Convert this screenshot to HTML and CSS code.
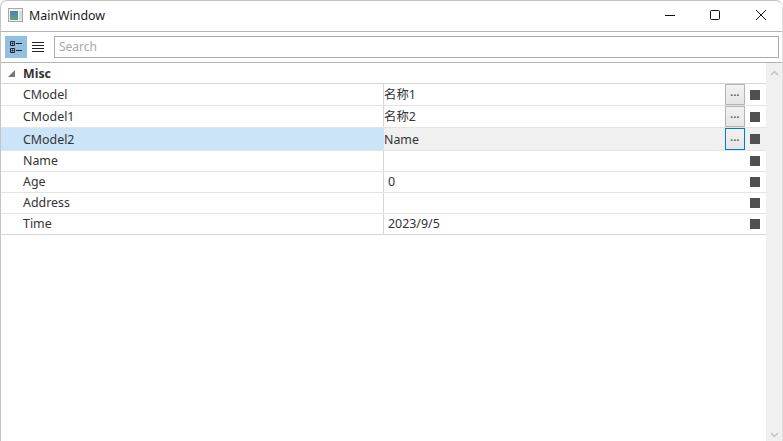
FILE: index.html
```html
<!DOCTYPE html>
<html lang="en">
<head>
  <meta charset="UTF-8">
  <title>MainWindow</title>
  <link rel="stylesheet" href="styles.css">
</head>
<body>
  <div class="window">
    <div class="titlebar">
      <svg class="app-icon" width="16" height="16" viewBox="0 0 16 16">
        <defs>
          <linearGradient id="pane" x1="0" y1="0" x2="0" y2="1">
            <stop offset="0" stop-color="#4d7fb5"/>
            <stop offset="1" stop-color="#5fa37c"/>
          </linearGradient>
        </defs>
        <rect x="0.5" y="0.5" width="14" height="13" fill="#f2f2f2" stroke="#a6a6a6"/>
        <rect x="2" y="3" width="8" height="9" fill="url(#pane)"/>
        <rect x="11" y="3" width="3" height="9" fill="#d5dedc"/>
      </svg>
      <span class="title">MainWindow</span>
      <div class="caption-buttons">
        <svg class="caption-btn" width="46" height="30" viewBox="0 0 46 30"><path d="M21 14.5h10" stroke="#111" fill="none"/></svg>
        <svg class="caption-btn" width="46" height="30" viewBox="0 0 46 30"><rect x="20.5" y="9.5" width="9" height="9" rx="1" stroke="#111" fill="none"/></svg>
        <svg class="caption-btn" width="46" height="30" viewBox="0 0 46 30"><path d="M20 9l10 10M30 9l-10 10" stroke="#111" fill="none"/></svg>
      </div>
    </div>

    <div class="toolbar">
      <button class="tool-btn active">
        <svg width="14" height="14" viewBox="0 0 14 14">
          <path d="M1.5 1.5h4v4h-4zM1.5 8.5h4v4h-4z" fill="none" stroke="#222"/>
          <path d="M2.5 3.5h2M3.5 2.5v2M2.5 10.5h2M3.5 9.5v2M7 3.5h6M7 10.5h6" stroke="#222" fill="none"/>
        </svg>
      </button>
      <button class="tool-btn">
        <svg width="14" height="14" viewBox="0 0 14 14">
          <path d="M1 2.5h12M1 5.5h12M1 8.5h12M1 11.5h12" stroke="#222" fill="none"/>
        </svg>
      </button>
      <div class="search">Search</div>
    </div>

    <div class="content">
      <div class="grid">
        <div class="category">
          <svg class="expander" width="7" height="7" viewBox="0 0 7 7"><path d="M7 0v7H0z" fill="#777"/></svg>
          <span>Misc</span>
        </div>

        <div class="row tall">
          <div class="name">CModel</div>
          <div class="value tight">名称1</div>
          <div class="more"><button class="more-btn">...</button></div>
          <div class="marker"></div>
        </div>
        <div class="row tall">
          <div class="name">CModel1</div>
          <div class="value tight">名称2</div>
          <div class="more"><button class="more-btn">...</button></div>
          <div class="marker"></div>
        </div>
        <div class="row tall selected">
          <div class="name">CModel2</div>
          <div class="value tight">Name</div>
          <div class="more"><button class="more-btn focused">...</button></div>
          <div class="marker"></div>
        </div>
        <div class="row">
          <div class="name">Name</div>
          <div class="value"></div>
          <div class="more"></div>
          <div class="marker"></div>
        </div>
        <div class="row">
          <div class="name">Age</div>
          <div class="value">0</div>
          <div class="more"></div>
          <div class="marker"></div>
        </div>
        <div class="row">
          <div class="name">Address</div>
          <div class="value"></div>
          <div class="more"></div>
          <div class="marker"></div>
        </div>
        <div class="row">
          <div class="name">Time</div>
          <div class="value">2023/9/5</div>
          <div class="more"></div>
          <div class="marker"></div>
        </div>
      </div>

      <div class="scrollbar">
        <svg width="9" height="6" viewBox="0 0 9 6"><path d="M1 5l3.5-3.5L8 5" stroke="#c4c4c4" stroke-width="1.5" fill="none"/></svg>
        <svg width="9" height="6" viewBox="0 0 9 6"><path d="M1 1l3.5 3.5L8 1" stroke="#c4c4c4" stroke-width="1.5" fill="none"/></svg>
      </div>
    </div>
  </div>
</body>
</html>
```

FILE: styles.css
```css
* {
  box-sizing: border-box;
}

html, body {
  height: 100%;
}

body {
  margin: 0;
  background: #fff;
  font-family: "Noto Sans", "Noto Sans CJK SC", sans-serif;
  font-size: 12.4px;
  color: #333;
  overflow: hidden;
}

.window {
  display: flex;
  flex-direction: column;
  height: 441px;
  border-left: 1px solid #c4c4c4;
  border-top: 1px solid #c4c4c4;
  border-right: 1px solid #e0e0e0;
  border-radius: 7px 7px 0 0;
}

.titlebar {
  display: flex;
  align-items: center;
  height: 30px;
  padding-left: 7px;
  flex-shrink: 0;
}

.app-icon {
  margin-right: 5px;
}

.title {
  padding-bottom: 2px;
  color: #1a1a1a;
}

.caption-buttons {
  display: flex;
  margin-left: auto;
}

.toolbar {
  display: flex;
  align-items: center;
  height: 32px;
  padding: 0 3px 0 4px;
  border-top: 1px solid #b4b4b4;
  border-bottom: 1px solid #b4b4b4;
  flex-shrink: 0;
}

.tool-btn {
  display: flex;
  align-items: center;
  justify-content: center;
  width: 22px;
  height: 22px;
  padding: 0;
  border: none;
  background: transparent;
}

.tool-btn.active {
  background: #92c0e0;
}

.search {
  flex: 1;
  height: 22px;
  margin-left: 5px;
  padding-left: 4px;
  border: 1px solid #ababab;
  color: #a9a9a9;
  font-size: 12px;
  line-height: 19px;
}

.content {
  display: flex;
  flex: 1;
  min-height: 0;
}

.grid {
  flex: 1;
}

.category {
  display: flex;
  align-items: center;
  height: 21px;
  padding-left: 7px;
  font-weight: 700;
  border-bottom: 1px solid #d6d6d6;
}

.expander {
  margin-right: 8px;
}

.row {
  display: flex;
  height: 21px;
  border-bottom: 1px solid #e4e4e4;
  line-height: 20px;
}

.row.tall {
  height: 22px;
  line-height: 22px;
}

.row.selected {
  height: 23px;
  line-height: 23px;
  background: #f0f0f0;
}

.row:last-child {
  border-bottom-color: #d6d6d6;
}

.name {
  width: 383px;
  padding-left: 22px;
  border-right: 1px solid #d6d6d6;
  flex-shrink: 0;
}

.row.selected .name {
  background: #cce4f7;
  border-right-color: #cce4f7;
}

.value {
  flex: 1;
  padding-left: 4px;
}

.value.tight {
  padding-left: 0;
}

.more {
  display: flex;
  align-items: flex-start;
  width: 20px;
}

.more-btn {
  width: 20px;
  height: 21px;
  padding: 0 0 5px;
  border: 1px solid #b4b4b4;
  background: linear-gradient(#f2f2f2, #e6e6e6);
  font-family: "Noto Sans", sans-serif;
  font-size: 10px;
  font-weight: 700;
  line-height: 14px;
  letter-spacing: 0.3px;
  color: #555;
}

.row.selected .more-btn {
  height: 22px;
}

.more-btn.focused {
  border-color: #0078d7;
}

.marker {
  display: flex;
  align-items: center;
  width: 21px;
  padding-left: 5px;
}

.marker::after {
  content: "";
  width: 10px;
  height: 10px;
  background: #505050;
}

.scrollbar {
  display: flex;
  flex-direction: column;
  align-items: center;
  justify-content: space-between;
  width: 16px;
  padding: 7px 0 3px;
  background: #f0f0f0;
}
```
